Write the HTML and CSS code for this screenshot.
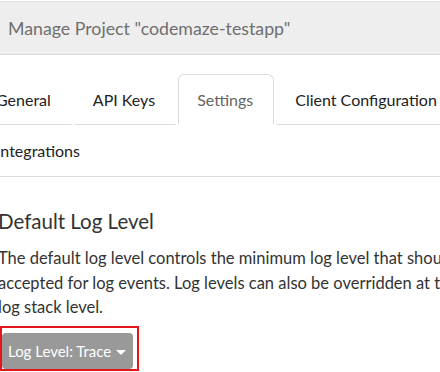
FILE: index.html
```html
<!DOCTYPE html>
<html lang="en">
<head>
  <meta charset="UTF-8" />
  <title>Manage Project</title>
  <link rel="stylesheet" href="styles.css">
</head>
<body>
  <div class="page-header">
    <h1>Manage Project "codemaze-testapp"</h1>
  </div>
  <ul class="nav-tabs">
    <li><a href="#">General</a></li>
    <li><a href="#">API Keys</a></li>
    <li class="active"><a href="#">Settings</a></li>
    <li><a href="#">Client Configuration</a></li>
    <li class="last"><a href="#">Integrations</a></li>
  </ul>
  <div class="content">
    <h2>Default Log Level</h2>
    <p>The default log level controls the minimum log level that should be accepted for log events. Log levels can also be overridden at the log stack level.</p>
    <div class="highlight">
      <button class="btn-level">Log Level: Trace <span class="caret"></span></button>
    </div>
  </div>
</body>
</html>
```

FILE: styles.css
```css
:root {
  --border: #dddddd;
  --text: #333333;
  --muted: #666666;
}
* { box-sizing: border-box; }
body {
  margin: 0;
  width: 440px;
  height: 372px;
  overflow: hidden;
  font-family: 'Lato', sans-serif;
  color: var(--text);
  background: white;
}
.page-header {
  margin-top: 1px;
  height: 54px;
  background: #eeeeee;
  border-top: 1px solid #e2e2e2;
  border-bottom: 1px solid #d8d8d8;
  padding: 0 8px;
  display: flex;
  align-items: center;
}
.page-header h1 {
  margin: 0;
  font-size: 17.75px;
  font-weight: 400;
  color: #6f6f6f;
  white-space: nowrap;
}
.nav-tabs {
  list-style: none;
  margin: 19px 0 0 -23px;
  padding: 0;
  display: flex;
  flex-wrap: wrap;
  width: 600px;
  border-bottom: 1px solid var(--border);
}
.nav-tabs li {
  margin-right: 2px;
  border: 1px solid transparent;
  border-bottom-color: var(--border);
  border-radius: 4px 4px 0 0;
}
.nav-tabs li a {
  display: block;
  padding: 14px 20px 13px 18px;
  font-size: 16px;
  line-height: 22px;
  color: #222222;
  text-decoration: none;
}
.nav-tabs li.active {
  border-color: var(--border);
  border-bottom-color: transparent;
  border-radius: 6px 6px 0 0;
}
.nav-tabs li.active a { color: var(--muted); }
.nav-tabs li.last { border-bottom-color: transparent; }
.content {
  margin-left: -2px;
  padding-top: 29px;
  width: 480px;
}
.content h2 {
  margin: 0 0 10px;
  font-size: 20.5px;
  font-weight: 400;
  line-height: 30px;
}
.content p {
  margin: 0 0 6px;
  font-size: 16.5px;
  line-height: 24.5px;
}
.highlight {
  display: inline-block;
  margin-left: 2px;
  border: 2px solid #e8141c;
  padding: 5px 4px 0 0;
}
.btn-level {
  display: block;
  width: 131px;
  height: 36px;
  background: #999999;
  color: white;
  border: none;
  border-radius: 4px;
  padding: 0 6px;
  text-align: left;
  font-family: 'Lato', sans-serif;
  font-size: 15px;
  line-height: 22px;
}
.caret {
  display: inline-block;
  width: 0;
  height: 0;
  margin-left: 1px;
  vertical-align: middle;
  border-top: 5px solid white;
  border-left: 5px solid transparent;
  border-right: 5px solid transparent;
}
```
